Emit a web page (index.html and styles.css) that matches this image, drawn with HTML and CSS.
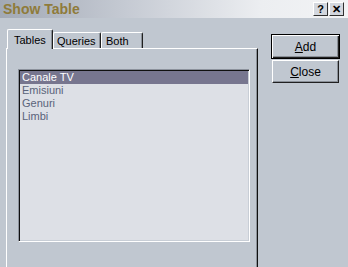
FILE: index.html
```html
<!DOCTYPE html>
<html lang="ro">
<head>
  <meta charset="UTF-8" />
  <title>Show Table</title>
  <link rel="stylesheet" href="styles.css">
</head>
<body>
  <div id="dialog">
    <div class="titlebar">
      <span class="title">Show Table</span>
      <div class="caption-btns">
        <span class="cap-btn">?</span>
        <span class="cap-btn">&#x2715;</span>
      </div>
    </div>
    <div class="main">
      <div class="left">
        <div class="tabs">
          <div class="tab active tab-tables">Tables</div>
          <div class="tab tab-queries">Queries</div>
          <div class="tab tab-both">Both</div>
        </div>
        <div class="panel">
          <div class="listbox">
            <div class="row selected">Canale TV</div>
            <div class="row">Emisiuni</div>
            <div class="row">Genuri</div>
            <div class="row">Limbi</div>
          </div>
        </div>
      </div>
      <div class="buttons">
        <div class="btn default"><span class="btn-face"><u>A</u>dd</span></div>
        <div class="btn"><span class="btn-face"><u>C</u>lose</span></div>
      </div>
    </div>
  </div>
</body>
</html>
```

FILE: styles.css
```css
html, body {
  margin: 0;
  padding: 0;
  height: 100%;
  overflow: hidden;
}
body {
  font-family: "Liberation Sans", Arial, sans-serif;
  font-size: 11px;
  background: #c0c7d0;
}
#dialog {
  width: 348px;
  height: 267px;
}
.titlebar {
  height: 18px;
  display: flex;
  align-items: center;
  justify-content: space-between;
  background: linear-gradient(to right, #a2a9b5 0%, #c4c9d2 35%, #eceef1 75%, #f2f3f5 100%);
}
.title {
  padding-left: 3px;
  font-size: 14px;
  font-weight: bold;
  color: #8f7b3a;
}
.caption-btns {
  display: flex;
  gap: 1px;
  margin-right: 4px;
}
.cap-btn {
  width: 13px;
  height: 12px;
  line-height: 12px;
  text-align: center;
  font-size: 11px;
  font-weight: bold;
  color: #000;
  background: #d3d7de;
  border-top: 1px solid #fff;
  border-left: 1px solid #fff;
  border-right: 1px solid #303030;
  border-bottom: 1px solid #303030;
}
.main {
  display: flex;
}
.left {
  padding-left: 6px;
  width: 252px;
}
.tabs {
  display: flex;
  align-items: flex-end;
  margin-top: 11px;
  height: 19px;
  padding-left: 1px;
  position: relative;
  z-index: 1;
}
.tab {
  box-sizing: border-box;
  height: 16px;
  line-height: 16px;
  color: #000;
  border-top: 1px solid #fff;
  border-left: 1px solid #fff;
  border-right: 1px solid #202020;
  border-radius: 2px 2px 0 0;
  box-shadow: inset -1px 0 0 #8a9098;
}
.tab.active {
  height: 20px;
  line-height: 20px;
  margin-bottom: -1px;
  background: #c0c7d0;
}
.tab-tables {
  width: 46px;
  padding-left: 6px;
}
.tab-queries {
  width: 48px;
  padding-left: 3px;
}
.tab-both {
  width: 42px;
  padding-left: 4px;
}
.panel {
  height: 209px;
  border-top: 1px solid #fff;
  border-left: 1px solid #fff;
  border-right: 1px solid #101010;
  border-bottom: 1px solid #101010;
  box-shadow: inset -1px -1px 0 #8a9098;
  padding: 20px 0 0 11px;
}
.listbox {
  width: 228px;
  height: 169px;
  background: #dde0e6;
  border-top: 1px solid #8c929c;
  border-left: 1px solid #8c929c;
  border-right: 1px solid #fff;
  border-bottom: 1px solid #fff;
  box-shadow: inset 1px 1px 0 #101010, inset -1px -1px 0 #c8ced6;
  padding: 1px 1px 1px 1px;
}
.row {
  height: 13px;
  line-height: 13px;
  padding-left: 2px;
  color: #5a637a;
}
.row.selected {
  background: #77768f;
  color: #fff;
}
.buttons {
  margin-left: 13px;
  margin-top: 16px;
  display: flex;
  flex-direction: column;
}
.btn {
  width: 67px;
  height: 23px;
  margin: 1px 0 0 1px;
  box-sizing: border-box;
  border-top: 1px solid #fff;
  border-left: 1px solid #fff;
  border-right: 1px solid #202020;
  border-bottom: 1px solid #202020;
  box-shadow: inset -1px -1px 0 #8a9098;
  display: flex;
  align-items: center;
  justify-content: center;
  color: #000;
}
.btn.default {
  width: 69px;
  height: 25px;
  margin: 0;
  border: 1px solid #000;
  box-shadow: inset 1px 1px 0 #fff, inset -1px -1px 0 #202020, inset -2px -2px 0 #8a9098;
}
.btn-face {
  font-size: 12px;
}
```
